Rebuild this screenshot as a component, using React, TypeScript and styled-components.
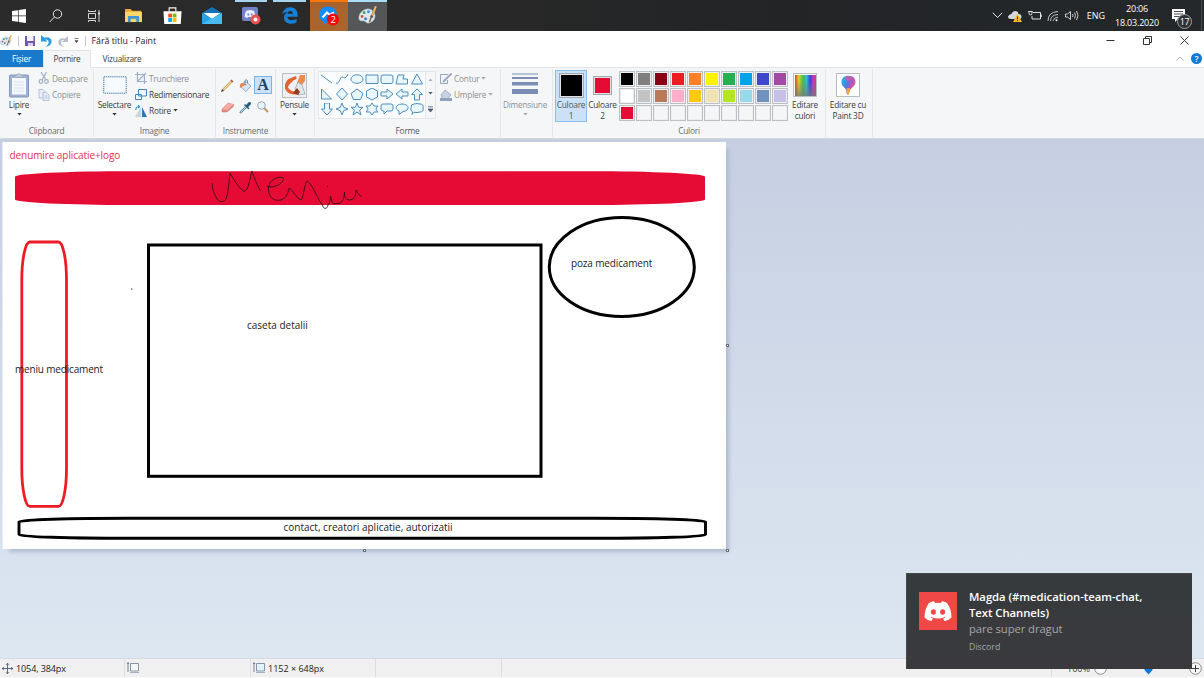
import React from "react";
import styled, { createGlobalStyle } from "styled-components";

const Global = createGlobalStyle`
  * { box-sizing: border-box; }
  html, body { margin: 0; padding: 0; overflow: hidden; }
  body { font-family: "Open Sans", "Noto Sans", sans-serif; }
  svg { display: block; flex: none; }
`;

const Desktop = styled.div`
  position: relative;
  width: 1204px;
  height: 678px;
  display: flex;
  flex-direction: column;
  overflow: hidden;
  background: #fff;
`;

const Text = styled.span<{ $size?: number; $space?: number; $color?: string }>`
  font-size: ${(p) => p.$size ?? 8.3}px;
  letter-spacing: ${(p) => p.$space ?? (p.$size ? 0 : -0.22)}px;
  color: ${(p) => p.$color ?? "#3c3c3c"};
  line-height: 11px;
  white-space: nowrap;
`;

/* Taskbar */
const Taskbar = styled.header`
  height: 31px;
  flex: none;
  display: flex;
  background: linear-gradient(90deg, #2b2b2b, #282828 40%, #222426 65%, #25282b);
`;
const TaskButton = styled.div<{ $width?: number; $bg?: string; $bar?: string; $inset?: number }>`
  width: ${(p) => p.$width ?? 39}px;
  height: 31px;
  display: flex;
  align-items: center;
  justify-content: center;
  background: linear-gradient(${(p) => p.$bar ?? "transparent"}, ${(p) => p.$bar ?? "transparent"}) center top /
      calc(100% - ${(p) => p.$inset ?? 0}px) 2px no-repeat,
    ${(p) => p.$bg ?? "transparent"};
`;
const Tray = styled.div`
  margin-left: auto;
  display: flex;
  align-items: center;
  height: 31px;
  padding-right: 2px;
`;
const TrayIcons = styled.div`
  display: flex;
  align-items: center;
  gap: 5.5px;
  margin-right: 8px;
`;
const Clock = styled.div`
  width: 46px;
  margin: 0 12px 0 9px;
  display: flex;
  flex-direction: column;
  align-items: center;
  gap: 3px;
`;
const Action = styled.div`
  position: relative;
  width: 30px;
  height: 31px;
  border-right: 1px solid #4b4d4f;
  padding-top: 8px;
`;
const ActionCount = styled.div`
  position: absolute;
  left: 5px;
  top: 14px;
  width: 15px;
  height: 15px;
  border: 1px solid #9b9d9f;
  border-radius: 50%;
  background: #303235;
  color: #fff;
  font-size: 9px;
  letter-spacing: -0.3px;
  line-height: 13px;
  text-align: center;
`;

/* Title bar and tabs */
const TitleBar = styled.div`
  height: 19px;
  flex: none;
  display: flex;
  align-items: center;
  padding-top: 1px;
`;
const QuickTools = styled.div`
  display: flex;
  align-items: center;
  width: 91.5px;
  gap: 6px;
`;
const Separator = styled.i<{ $h?: number }>`
  width: 1px;
  height: ${(p) => p.$h ?? 10}px;
  background: #c6c6c6;
  flex: none;
`;
const WindowButtons = styled.div`
  margin-left: auto;
  display: flex;
  align-items: center;
  gap: 28px;
  padding-right: 15px;
  margin-top: -1px;
`;
const Tabs = styled.nav`
  height: 18px;
  flex: none;
  display: flex;
  border-bottom: 1px solid #e2e4e7;
`;
const Tab = styled.div<{ $kind: "file" | "active" | "plain"; $width: number }>`
  width: ${(p) => p.$width}px;
  height: ${(p) => (p.$kind === "active" ? 18 : 17)}px;
  display: flex;
  align-items: center;
  justify-content: center;
  padding-bottom: ${(p) => (p.$kind === "active" ? 2 : 1)}px;
  background: ${(p) => (p.$kind === "file" ? "#1979ca" : p.$kind === "active" ? "#f4f6f8" : "#fff")};
  border: ${(p) => (p.$kind === "active" ? "1px solid #e2e4e7" : "0")};
  border-bottom: 0;
`;
const TabEnd = styled.div`
  margin-left: auto;
  display: flex;
  align-items: center;
  gap: 7px;
`;
const Help = styled.div`
  width: 11px;
  height: 11px;
  margin-right: 2px;
  border-radius: 50%;
  background: #0f7bd7;
  color: #fff;
  font-size: 9px;
  font-weight: 600;
  line-height: 11px;
  text-align: center;
`;

/* Ribbon */
const Ribbon = styled.section`
  height: 71px;
  flex: none;
  display: flex;
  background: #f4f6f8;
  border-bottom: 1px solid #d3d7db;
`;
const Group = styled.div<{ $width: number }>`
  width: ${(p) => p.$width}px;
  height: 68px;
  margin-top: 1px;
  display: flex;
  flex-direction: column;
  border-right: 1px solid #e5e8eb;
`;
const GroupBody = styled.div<{ $pad?: string; $gap?: number }>`
  height: 56px;
  display: flex;
  align-items: flex-start;
  padding: ${(p) => p.$pad ?? "1px 0 0"};
  gap: ${(p) => p.$gap ?? 0}px;
`;
const GroupLabel = styled.div`
  height: 11px;
  display: flex;
  align-items: center;
  justify-content: center;
`;
const BigButton = styled.div<{ $width: number; $selected?: boolean }>`
  width: ${(p) => p.$width}px;
  height: 52px;
  flex: none;
  display: flex;
  flex-direction: column;
  align-items: center;
  border: 1px solid ${(p) => (p.$selected ? "#8cbcec" : "transparent")};
  background: ${(p) => (p.$selected ? "#cbe1f7" : "transparent")};
`;
const BigIcon = styled.div`
  height: 28px;
  flex: none;
  display: flex;
  align-items: center;
`;
const DropCaret = styled.div`
  margin-top: 3px;
`;
const Column = styled.div<{ $pad?: string }>`
  display: flex;
  flex-direction: column;
  padding: ${(p) => p.$pad ?? "0"};
`;
const SmallRow = styled.div`
  height: 16.4px;
  display: flex;
  align-items: center;
  gap: 2px;
`;
const ToolGrid = styled.div`
  height: 56px;
  display: grid;
  grid-template-columns: repeat(3, 17.6px);
  grid-template-rows: 18px 26px;
  padding: 7px 0 0 3px;
`;
const Tool = styled.div<{ $selected?: boolean }>`
  display: flex;
  align-items: center;
  justify-content: center;
  height: 18px;
  align-self: center;
  border: 1px solid ${(p) => (p.$selected ? "#7fb2e5" : "transparent")};
  background: ${(p) => (p.$selected ? "#cbe1f7" : "transparent")};
`;
const BoldA = styled.b`
  font-family: "Liberation Serif", serif;
  font-size: 16px;
  line-height: 16px;
  color: #1d3f66;
`;
const Frame = styled.div<{ $w?: number }>`
  width: ${(p) => p.$w ?? 25}px;
  height: ${(p) => p.$w ?? 25}px;
  border: 1px solid #b8bec5;
  background: #fff;
  display: flex;
  align-items: center;
  justify-content: center;
`;
const Gallery = styled.div`
  height: 48px;
  width: 118px;
  display: flex;
  margin-top: 1px;
  border: 1px solid #e2e6ea;
`;
const ShapeGrid = styled.div`
  display: grid;
  grid-template-columns: repeat(7, 15.1px);
  grid-template-rows: repeat(3, 15.2px);
  width: 107px;
  background: #fbfcfd;
`;
const ShapeCell = styled.div`
  display: flex;
  align-items: center;
  justify-content: center;
`;
const GalleryScroll = styled.div`
  width: 10px;
  display: flex;
  flex-direction: column;
  justify-content: space-around;
  align-items: center;
  border-left: 1px solid #e2e6ea;
`;
const Chip = styled.div<{ $size: number; $color: string }>`
  width: ${(p) => p.$size}px;
  height: ${(p) => p.$size}px;
  border: 1px solid #a3a8ad;
  box-shadow: inset 0 0 0 1px #dfe3e7;
  background: ${(p) => p.$color};
`;
const Palette = styled.div`
  display: grid;
  grid-template-columns: repeat(10, 16px);
  grid-template-rows: repeat(3, 16px);
  gap: 1px;
  margin: 1px 3px 0 1px;
`;
const Swatch = styled.div<{ $color?: string }>`
  border: 1px solid #bdc0c4;
  box-shadow: inset 0 0 0 1px #eceef0;
  background: ${(p) => p.$color ?? "#f4f6f8"};
`;

/* Workspace */
const Workspace = styled.main`
  height: 519px;
  flex: none;
  padding: 3px 0 0 2px;
  background: linear-gradient(#c5cfe1, #dde7f2);
`;
const Canvas = styled.div`
  position: relative;
  width: 724px;
  height: 407px;
  background: #fff;
  border-left: 1px solid #e6ebf3;
  box-shadow: 5px 5px 4px -2px #aebbd1;
`;
const Drawing = styled.svg`
  position: absolute;
  left: -1px;
  top: 0;
`;
const Note = styled.span<{ $x: number; $y: number; $color?: string; $space?: number }>`
  position: absolute;
  left: ${(p) => p.$x - 3}px;
  top: ${(p) => p.$y - 149}px;
  font-family: "Open Sans", sans-serif;
  font-size: 10px;
  line-height: 14px;
  letter-spacing: ${(p) => p.$space ?? 0}px;
  color: ${(p) => p.$color ?? "#1c1c1c"};
  white-space: nowrap;
`;
const Handle = styled.i<{ $x: number; $y: number }>`
  position: absolute;
  left: ${(p) => p.$x - 3}px;
  top: ${(p) => p.$y - 142}px;
  width: 3px;
  height: 3px;
  border: 1px solid #6d7279;
  background: #fff;
`;

/* Status bar */
const StatusBar = styled.footer`
  height: 20px;
  flex: none;
  display: flex;
  background: #f0f0f0;
  border-top: 1px solid #d6dde5;
  border-bottom: 1px solid #fafafa;
`;
const StatusCell = styled.div<{ $width: number }>`
  width: ${(p) => p.$width}px;
  display: flex;
  align-items: center;
  gap: 3px;
  padding-left: 2px;
  border-right: 1px solid #dedede;
`;
const Zoom = styled.div`
  margin-left: auto;
  width: 153px;
  display: flex;
  align-items: center;
  padding-left: 15px;
  border-left: 1px solid #dedede;
`;
const ZoomGap = styled.div`
  width: 4px;
`;
const Thumb = styled.div`
  margin: 0 36px 0 37px;
`;

/* Notification */
const Toast = styled.aside`
  position: absolute;
  left: 906px;
  top: 573px;
  width: 286px;
  height: 96px;
  padding: 18px 0 0 13px;
  display: flex;
  gap: 12px;
  background: linear-gradient(#363a3d, #3a3a3d);
  border: 1px solid #45494c;
  border-width: 1px 0 0 1px;
`;
const ToastIcon = styled.div`
  width: 38px;
  height: 38px;
  margin-left: -1px;
  background: #f04747;
  display: flex;
  align-items: center;
  justify-content: center;
`;
const ToastText = styled.div`
  display: flex;
  flex-direction: column;
  margin-top: -3px;
`;
const ToastTitle = styled.b`
  width: 190px;
  font-size: 11.3px;
  font-weight: 600;
  letter-spacing: -0.04px;
  line-height: 15.6px;
  color: #fff;
`;
const ToastLine = styled.span`
  font-size: 11.3px;
  letter-spacing: -0.1px;
  line-height: 17px;
  color: #a5a6a8;
`;
const ToastSource = styled.span`
  margin-top: 3px;
  font-size: 8.8px;
  line-height: 14px;
  color: #a5a6a8;
`;

const Caret = ({ color = "#333", up = false }: { color?: string; up?: boolean }) => (
  <svg width="5" height="3" viewBox="0 0 5 3">
    <path d={up ? "M.4 3h4.2L2.5.5z" : "M.4 0h4.2L2.5 2.5z"} fill={color} />
  </svg>
);

const PaletteIcon = ({ size }: { size: number }) => (
  <svg width={size} height={size} viewBox="0 0 20 20">
    <path d="M10 3C4 4 0 9 1 14c1 3 4 1 6 2 2 2 4 3 7 1 4-2 5-7 3-10-2-3-4-4-7-4z" fill="#dce8f1" stroke="#8ba2b3" strokeWidth=".6" />
    <circle cx="4.3" cy="11" r="1.5" fill="#e34f3e" />
    <circle cx="6.5" cy="7" r="1.5" fill="#3da64c" />
    <circle cx="11" cy="6" r="1.5" fill="#3f8edb" />
    <circle cx="14.5" cy="11" r="1.5" fill="#35597b" />
    <circle cx="8" cy="13.500" r="1.5" fill="#3f78b7" />
    <path d="M17.500 2 12 17" stroke="#8a5c2c" strokeWidth="1.500" />
    <path d="M18.500 1 15.500 9" stroke="#e9ac66" strokeWidth="2.200" strokeLinecap="round" />
  </svg>
);

const DiscordFace = ({ width, eyes, fill = "#fff" }: { width: number; eyes: string; fill?: string }) => (
  <svg width={width} height={width * 0.75} viewBox="0 0 28 21">
    <path
      d="M5 2Q7.500.6 10 .3l1.200 1.600q2.800-.5 5.600 0L18 .3q2.500.3 5 1.700 4.500 6 4.500 14.500Q25 19.500 20.500 20L19 17.700l2.500-1.200-.6-.5q-6.900 3-13.800 0l-.6.5L9 17.700 7.500 20Q3 19.500.5 16.500.5 8 5 2z"
      fill={fill}
    />
    <ellipse cx="9.400" cy="11" rx="2.500" ry="2.800" fill={eyes} />
    <ellipse cx="18.600" cy="11" rx="2.500" ry="2.800" fill={eyes} />
  </svg>
);

const shapes = [
  "M1 2 12 10",
  "M1 10C4 12 5 5 6.500 4S10 8 13 1",
  "M7 1.800c8 0 8 8.500 0 8.500s-8-8.500 0-8.500z",
  "M1 2h12v8.500H1z",
  "M3 2h8q2 0 2 2v4.500q0 2-2 2H3q-2 0-2-2V4q0-2 2-2z",
  "M3 2h6L8 6h4.500v5H1z",
  "M7 1 12.500 11h-11z",
  "M1.500 1v10h10z",
  "M7 0l5.500 6L7 12 1.500 6z",
  "M7 1l6 4.500L10.500 11.500h-7L1 5.500z",
  "M7 0l5.500 3v6L7 12 1.500 9V3z",
  "M1 4h6V1l6 5-6 5V8H1z",
  "M13 4H7V1L1 6l6 5V8h6z",
  "M4.500 12V6.500H1.500L7 1l5.500 5.500h-3V12z",
  "M4.500 0v6h-3L7 12l5.500-6h-3V0z",
  "M7 0l1.700 4.300L13 6 8.700 7.700 7 12 5.300 7.700 1 6l4.300-1.700z",
  "M7 0l1.700 4.300H13l-3.400 2.800L11 12 7 9l-4 3 1.400-4.900L1 4.300h4.300z",
  "M7 0l2 3h3.800l-1.900 3 1.900 3H9l-2 3-2-3H1.200l1.900-3-1.900-3H5z",
  "M3 1h8q2 0 2 2v3q0 2-2 2H7l-3 3V8H3Q1 8 1 6V3q0-2 2-2z",
  "M7 1c8 0 8 7 1 7.500L4 11.500V8C-1 6 1 1 7 1z",
  "M4 1q3-1 6 0 4 0 3 4 1 4-3 4-3 1-6 .3L2 11.500 2.500 9Q0 7 1 4.500 1 1 4 1z",
];

const row1 = ["#000000", "#7f7f7f", "#880015", "#ed1c24", "#ff7f27", "#fff200", "#22b14c", "#00a2e8", "#3f48cc", "#a349a4"];
const row2 = ["#ffffff", "#c3c3c3", "#b97a57", "#ffaec9", "#ffc90e", "#efe4b0", "#b5e61d", "#99d9ea", "#7092be", "#c8bfe7"];
const palette: (string | undefined)[] = [...row1, ...row2, "#e60b35", ...Array(9).fill(undefined)];

const muted = "#8e9196";

function SizeIcon({ fill }: { fill: string }) {
  return (
    <svg width="12" height="12" viewBox="0 0 12 12">
      <path d="M3.500 1.500h8v7.500h-8z" fill={fill} stroke="#8595ab" />
      <path d="M1 1v9M0 2l1-1.500L2 2" fill="none" stroke="#53677f" strokeWidth=".8" />
      <path d="M3 10.500h9" stroke="#a5b1c1" />
    </svg>
  );
}

function ZoomIcon({ plus = false }: { plus?: boolean }) {
  return (
    <svg width="13" height="13" viewBox="0 0 13 13" fill="#f8f8f8" stroke="#8b8b8b">
      <circle cx="6.500" cy="6.500" r="5.800" />
      <path d={plus ? "M3 6.500h7M6.500 3v7" : "M3 6.500h7"} stroke="#444" />
    </svg>
  );
}

export default function App() {
  return (
    <Desktop>
      <Global />
      <Taskbar>
        <TaskButton $width={37}>
          <svg width="14" height="14" viewBox="0 0 14 14" fill="#fff">
            <path d="M0 2 6 1.200V6.600H0zM6.700 1.100 14 0v6.600H6.700zM0 7.300h6v5.500L0 12zM6.700 7.300H14V14L6.700 12.900z" />
          </svg>
        </TaskButton>
        <TaskButton $width={38}>
          <svg width="14" height="14" viewBox="0 0 14 14" fill="none" stroke="#e6e6e6" strokeWidth="1">
            <circle cx="8.500" cy="5" r="4.200" />
            <path d="M5.500 8 .7 13" />
          </svg>
        </TaskButton>
        <TaskButton $width={37}>
          <svg width="14" height="14" viewBox="0 0 14 14" fill="none" stroke="#d5d5d5">
            <path d="M1.500 4.500h7v5h-7zM1.500 1v1.500h7V1M1.500 13v-1.500h7V13M12 1v12" />
            <path d="M11 4.500h2" strokeWidth="2" />
          </svg>
        </TaskButton>
        <TaskButton $width={42}>
          <svg width="17" height="15" viewBox="0 0 18 16">
            <path d="M0 1h6l1.500 2H17v12H0z" fill="#e8ab2c" />
            <path d="M0 4h18v11H0z" fill="#ffd768" />
            <path d="M3 15V9.500q0-1 1-1h10q1 0 1 1V15h-3v-3.500H6V15z" fill="#3e94d6" />
          </svg>
        </TaskButton>
        <TaskButton $width={37}>
          <svg width="19" height="19" viewBox="0 0 20 19">
            <path d="M6.500 5V1.500h7V5" fill="none" stroke="#f4f4f4" strokeWidth="1.200" />
            <path d="M.5 5h19l-.8 13.500H1.300z" fill="#fff" />
            <path d="M5.500 7.500h4v4h-4z" fill="#f25022" />
            <path d="M10.200 7.500h4v4h-4z" fill="#7fba00" />
            <path d="M5.500 12.200h4v4h-4z" fill="#00a4ef" />
            <path d="M10.200 12.200h4v4h-4z" fill="#ffb900" />
          </svg>
        </TaskButton>
        <TaskButton $width={41}>
          <svg width="20" height="17" viewBox="0 0 20 17">
            <path d="M0 6 10 0l10 6v11H0z" fill="#1673ba" />
            <path d="M1.500 6h17L10 12z" fill="#fff" />
            <path d="M0 6l10 6L20 6v11H0z" fill="#2aa3e5" />
            <path d="M0 17 20 6v11z" fill="#48bcf2" />
          </svg>
        </TaskButton>
        <TaskButton $width={38} $bar="#a6d3ee" $inset={6}>
          <svg width="19" height="18" viewBox="0 0 19 18">
            <path d="M2 0h12q2 0 2 2v14l-3-2H2q-2 0-2-2V2Q0 0 2 0z" fill="#7182c9" />
            <path d="M4 4q4-2 8 0 1.500 3 1.300 6Q12 11 10.500 11L10 10H6l-.5 1Q4 11 2.700 10 2.500 7 4 4z" fill="#e8edff" />
            <circle cx="6.300" cy="7.500" r="1" fill="#7182c9" />
            <circle cx="9.800" cy="7.500" r="1" fill="#7182c9" />
            <circle cx="13.500" cy="12.500" r="5" fill="#f04f50" />
            <circle cx="13.500" cy="12.500" r="2" fill="#fff" />
          </svg>
        </TaskButton>
        <TaskButton $width={39.5} $bar="#a6d3ee" $inset={7}>
          <svg width="16" height="17" viewBox="0 0 16 17">
            <path
              d="M.4 7.500C1 3 4 .2 8 .2c5 0 7.800 3.500 7.700 7.800v1.800H5.300c.2 2.500 2.300 3.500 4.700 3.500 1.800 0 3.300-.5 4.500-1.200v3.500c-1.500.8-3.300 1.200-5.300 1.200-4.400 0-7.200-2.500-7.200-6 0-2.600 1.500-4.700 3.800-5.700C3.800 5 1.600 5.800.4 7.500zM5.500 6.800h5.400c0-1.900-1-2.800-2.600-2.800-1.500 0-2.500 1-2.800 2.800z"
              fill="#1580d8"
            />
          </svg>
        </TaskButton>
        <TaskButton $width={38.5} $bg="#a9632b" $bar="#ff7708">
          <svg width="20" height="20" viewBox="0 0 20 20">
            <path d="M9 .5c5 0 9 3.500 9 8.300S14 17 9 17l-2-.2L4 19v-3.500C1.500 14 0 11.500 0 8.800 0 4 4 .5 9 .5z" fill="#128bff" />
            <path d="M3.500 11.500 8 6.500l2.500 2.300L15 6.500" fill="none" stroke="#fff" strokeWidth="2" />
            <circle cx="14" cy="13.500" r="6" fill="#f90808" />
            <text x="11.500" y="17" fontSize="9.500" fill="#fff" fontFamily="Open Sans">2</text>
          </svg>
        </TaskButton>
        <TaskButton $width={39} $bg="#555658" $bar="#a8dcfa">
          <PaletteIcon size={19} />
        </TaskButton>
        <Tray>
          <TrayIcons>
            <svg width="11" height="7" viewBox="0 0 11 7" fill="none" stroke="#e6e6e6">
              <path d="M.8.8 5.500 5.500 10.200.8" />
            </svg>
            <svg width="14" height="12" viewBox="0 0 14 12">
              <path d="M3 9Q0 9 0 6.500 1 4 3.500 4q1-3 4-3 3 .5 3 3 3 0 3 3 0 2-2 2z" fill="#d5d8da" />
              <path d="M9.500 4 14 12H5z" fill="#f7b62d" />
              <path d="M9.500 6.500v2.800m0 .8v1" stroke="#39342b" />
            </svg>
            <svg width="14" height="11" viewBox="0 0 14 11" fill="none" stroke="#dedede">
              <path d="M5 2.500h7.500v6.500H4V6M13.300 4.500v2.500M1 1v2q0 2 1.500 2T4 3V1M.5 1.500h4" />
            </svg>
            <svg width="12" height="12" viewBox="0 0 12 12" fill="none" stroke="#bdbfc1" strokeWidth="1">
              <path d="M1 11Q1 2 11 1.500M3.500 11Q3.500 5 11 4.500M6 11Q6.500 7.500 11 7.200" />
              <circle cx="9.500" cy="10.300" r="1" fill="#fff" stroke="none" />
            </svg>
            <svg width="14" height="11" viewBox="0 0 14 11" fill="none" stroke="#dedede" strokeWidth=".9">
              <path d="M.5 4h2l3-2.500v8L2.500 7h-2zM7.500 4q1 1.500 0 3M9.500 2.500q2 3 0 6M11.500 1q3 4.500 0 9" />
            </svg>
          </TrayIcons>
          <Text $size={9} $color="#fff">ENG</Text>
          <Clock>
            <Text $size={9} $color="#fff" $space={-0.15}>20:06</Text>
            <Text $size={9} $color="#fff" $space={-0.2}>18.03.2020</Text>
          </Clock>
          <Action>
            <svg width="14" height="15" viewBox="0 0 14 15">
              <path d="M0 1h13v10H6l-3 3v-3H0z" fill="#fff" />
              <path d="M2 3.500h9M2 6h9M2 8.500h6" stroke="#36383b" strokeWidth=".9" />
            </svg>
            <ActionCount>17</ActionCount>
          </Action>
        </Tray>
      </Taskbar>

      <TitleBar>
        <QuickTools>
          <PaletteIcon size={12} />
          <Separator />
          <svg width="10" height="10" viewBox="0 0 10 10">
            <path d="M0 0h10v10H0z" fill="#7257b3" />
            <path d="M2 0h6.500v5H2z" fill="#eef1fa" />
            <path d="M3 7h5v3H3z" fill="#d7d0ea" />
          </svg>
          <svg width="11" height="12" viewBox="0 0 10 11">
            <path d="M0 0v6h6L4 4.200Q7 3.500 7 6.500T3.500 11Q10 10 9.700 5.500 8.500 1 3 2.500z" fill="#2f9be0" />
          </svg>
          <svg width="10" height="11" viewBox="0 0 10 11">
            <path d="M10 0v6H4l2-1.800Q3 3.500 3 6.500T6.500 11Q0 10 .3 5.500 1.500 1 7 2.500z" fill="#b5c0cf" />
          </svg>
          <svg width="5" height="6" viewBox="0 0 5 6">
            <path d="M.5.500h4M1 2.700h3L2.500 4.500z" fill="#444" stroke="#444" strokeWidth=".7" />
          </svg>
          <Separator />
        </QuickTools>
        <Text $size={8.8} $color="#222">Fără titlu - Paint</Text>
        <WindowButtons>
          <svg width="9" height="9" viewBox="0 0 9 9"><path d="M.5 4.500h8" stroke="#333" /></svg>
          <svg width="9" height="9" viewBox="0 0 9 9" fill="none" stroke="#333">
            <path d="M.5 2.500h6v6h-6zM2.500 2.500v-2h6v6h-2" />
          </svg>
          <svg width="9" height="9" viewBox="0 0 9 9"><path d="M.5.500l8 8M8.500.500l-8 8" stroke="#333" /></svg>
        </WindowButtons>
      </TitleBar>

      <Tabs>
        <Tab $kind="file" $width={43}><Text $color="#fff">Fișier</Text></Tab>
        <Tab $kind="active" $width={48}><Text>Pornire</Text></Tab>
        <Tab $kind="plain" $width={62}><Text>Vizualizare</Text></Tab>
        <TabEnd>
          <svg width="8" height="5" viewBox="0 0 8 5"><path d="M.5 4.500 4 1l3.500 3.500" fill="none" stroke="#a9acb0" /></svg>
          <Help>?</Help>
        </TabEnd>
      </Tabs>

      <Ribbon>
        <Group $width={94}>
          <GroupBody>
            <BigButton $width={38}>
              <BigIcon>
                <svg width="20" height="25" viewBox="0 0 20 25">
                  <rect x=".5" y="2" width="19" height="22" rx="1" fill="#9fb1d2" stroke="#8497bb" />
                  <path d="M3 5h14v16.500H3z" fill="#f4f7fc" />
                  <path d="M5 9h10M5 12h10M5 15h10M5 18h10" stroke="#d4ddec" strokeWidth=".8" />
                  <path d="M5.500 4.500q0-2 2-2Q8 .7 10 .7T12.500 2.500q2 0 2 2z" fill="#c0cadc" stroke="#8f9db8" strokeWidth=".6" />
                </svg>
              </BigIcon>
              <Text>Lipire</Text>
              <DropCaret><Caret /></DropCaret>
            </BigButton>
            <Column>
              <SmallRow>
                <svg width="12" height="12" viewBox="0 0 12 12" fill="none" stroke="#9fafc8" strokeWidth="1.200">
                  <path d="M3 0 8 8M8.500 0 4 8" /><circle cx="3" cy="9.500" r="1.800" /><circle cx="8.500" cy="9.500" r="1.800" />
                </svg>
                <Text $color={muted}>Decupare</Text>
              </SmallRow>
              <SmallRow>
                <svg width="12" height="12" viewBox="0 0 12 12" fill="#e8edf6" stroke="#afbdd6" strokeWidth=".9">
                  <path d="M1 .5h4l2 2V9H1z" /><path d="M5 3.500h3.500L11 6v5.500H5zM6.500 7h3M6.500 9h3" />
                </svg>
                <Text $color={muted}>Copiere</Text>
              </SmallRow>
            </Column>
          </GroupBody>
          <GroupLabel><Text $color="#6a6d71">Clipboard</Text></GroupLabel>
        </Group>

        <Group $width={122}>
          <GroupBody>
            <BigButton $width={41}>
              <BigIcon>
                <svg width="24" height="18" viewBox="0 0 24 18">
                  <rect x=".8" y=".8" width="22.400" height="16.400" fill="#f7fafc" stroke="#3779aa" strokeDasharray="1.300 .8" />
                </svg>
              </BigIcon>
              <Text>Selectare</Text>
              <DropCaret><Caret /></DropCaret>
            </BigButton>
            <Column>
              <SmallRow>
                <svg width="12" height="12" viewBox="0 0 12 12" fill="none" stroke="#9fafc8" strokeWidth="1.200">
                  <path d="M2.500 0v9.500H12M0 2.500h9.500V12M2.500 9.500 11 1" />
                </svg>
                <Text $color={muted}>Trunchiere</Text>
              </SmallRow>
              <SmallRow>
                <svg width="12" height="11" viewBox="0 0 12 11" fill="#eff8ff" stroke="#4189bd">
                  <path d="M3.500.5h8v6.500h-8zM.5 5.500h6v5h-6z" />
                </svg>
                <Text>Redimensionare</Text>
              </SmallRow>
              <SmallRow>
                <svg width="12" height="12" viewBox="0 0 12 12">
                  <path d="M6 2v10H0z" fill="#c4d5e5" /><path d="M7 2v10h5z" fill="#2878b5" />
                  <path d="M.7 5Q.5 1.500 4 1.500M3 0l2 1.500L3 3" fill="none" stroke="#2f83c6" />
                </svg>
                <Text>Rotire</Text>
                <Caret />
              </SmallRow>
            </Column>
          </GroupBody>
          <GroupLabel><Text $color="#6a6d71">Imagine</Text></GroupLabel>
        </Group>

        <Group $width={60}>
          <ToolGrid>
            <Tool>
              <svg width="13" height="13" viewBox="0 0 13 13">
                <path d="M2 11 11 2" stroke="#b68b35" strokeWidth="2.400" /><path d="M2.500 10.500 10.500 2.500" stroke="#f4dda0" strokeWidth="1.100" />
                <path d="m0 13 1-3L3 12z" fill="#453e38" /><path d="m10 1 2 2" stroke="#b85143" strokeWidth="1.500" />
              </svg>
            </Tool>
            <Tool>
              <svg width="13" height="13" viewBox="0 0 13 13">
                <path d="m6 2 6 5-5 5.500L2 8z" fill="#d7e6f2" stroke="#7c9ab1" strokeWidth=".8" />
                <path d="M1 9Q0 4 4 4l4 2Q4 6 1 9z" fill="#e58256" /><path d="M6 6V1.500Q7 0 8.500 1.500V4" fill="none" stroke="#6c8cab" />
              </svg>
            </Tool>
            <Tool $selected><BoldA>A</BoldA></Tool>
            <Tool>
              <svg width="13" height="11" viewBox="0 0 13 11">
                <path d="M1 7 7 1l5.500 1.500v2L6 10H1z" fill="#e88b86" stroke="#cd7772" strokeWidth=".5" /><path d="M1 7 7 1l5.500 1.500L6 8z" fill="#f5aaa2" />
              </svg>
            </Tool>
            <Tool>
              <svg width="13" height="13" viewBox="0 0 13 13">
                <path d="M1 12 7 6" stroke="#527d9d" strokeWidth="2" /><path d="M1.500 11.500 7 6" stroke="#cee8f8" strokeWidth=".8" />
                <path d="m6 4 3.500 3.500" stroke="#285a82" strokeWidth="1.600" strokeLinecap="round" /><path d="m8.500 4.800 2-2.300" stroke="#285a82" strokeWidth="3" strokeLinecap="round" />
              </svg>
            </Tool>
            <Tool>
              <svg width="12" height="12" viewBox="0 0 12 12">
                <path d="m7 7 4 4" stroke="#bd966e" strokeWidth="2" /><circle cx="4.500" cy="4.500" r="3.800" fill="#e7f3fc" stroke="#91a5b7" />
              </svg>
            </Tool>
          </ToolGrid>
          <GroupLabel><Text $color="#6a6d71">Instrumente</Text></GroupLabel>
        </Group>

        <Group $width={39}>
          <GroupBody>
            <BigButton $width={37}>
              <BigIcon>
                <Frame>
                  <svg width="23" height="23" viewBox="0 0 23 23">
                    <path d="M0 0h23v23H0z" fill="#eef1f3" />
                    <path d="M12 4Q2 7 3.500 14q2 4.500 7.500 5 5 0 7-2.500" fill="none" stroke="#e36432" strokeWidth="3.200" strokeLinecap="round" />
                    <path d="m12 4-3 4q-4 3-4.500 7Q2 7 12 4z" fill="#e36432" />
                    <path d="M17 1h5v6l-4 5-4-3z" fill="#ee8c4e" />
                    <path d="m15 8 4 3 3 9-7 1-3-6z" fill="#e3e7e9" stroke="#949da5" strokeWidth=".7" />
                    <path d="m10 19 4-5 3 4-2 3z" fill="#8e3d22" />
                  </svg>
                </Frame>
              </BigIcon>
              <Text>Pensule</Text>
              <DropCaret><Caret /></DropCaret>
            </BigButton>
          </GroupBody>
        </Group>

        <Group $width={186}>
          <GroupBody $pad="1px 0 0 3px" $gap={4}>
            <Gallery>
              <ShapeGrid>
                {shapes.map((d, i) => (
                  <ShapeCell key={i}>
                    <svg width="14" height="13" viewBox="0 0 14 13">
                      <path d={d} fill={i < 2 ? "none" : "#e9f6fc"} stroke="#4a8fbf" strokeWidth="1" />
                    </svg>
                  </ShapeCell>
                ))}
              </ShapeGrid>
              <GalleryScroll>
                <Caret up color="#a9b4c0" />
                <Caret color="#4a5e76" />
                <svg width="5" height="6" viewBox="0 0 5 6"><path d="M0 .8h5M0 3h5L2.500 6z" fill="#4a5e76" stroke="#4a5e76" strokeWidth=".8" /></svg>
              </GalleryScroll>
            </Gallery>
            <Column>
              <SmallRow>
                <svg width="12" height="11" viewBox="0 0 12 11" fill="none" stroke="#96a6c1">
                  <path d="M8 1.500H.5v9h7V7" /><path d="m3 9 8.500-8.500" strokeWidth="1.800" />
                </svg>
                <Text $color={muted}>Contur</Text>
                <Caret color="#a0a5ac" />
              </SmallRow>
              <SmallRow>
                <svg width="12" height="12" viewBox="0 0 12 12">
                  <path d="m5 1 6 5-4 4.500H3L1 6z" fill="#c6d1e2" stroke="#93a4be" strokeWidth=".8" /><path d="M0 9h12v3H0z" fill="#8fa0bd" />
                </svg>
                <Text $color={muted}>Umplere</Text>
                <Caret color="#a0a5ac" />
              </SmallRow>
            </Column>
          </GroupBody>
          <GroupLabel><Text $color="#55585c">Forme</Text></GroupLabel>
        </Group>

        <Group $width={52}>
          <GroupBody>
            <BigButton $width={48}>
              <BigIcon>
                <svg width="26" height="24" viewBox="0 0 26 24" fill="#7c8db3">
                  <path d="M0 .500h26v1H0zM0 4h26v2H0zM0 9h26v3.500H0zM0 16h26v5H0z" />
                </svg>
              </BigIcon>
              <Text $color={muted}>Dimensiune</Text>
              <DropCaret><Caret color="#a0a5ac" /></DropCaret>
            </BigButton>
          </GroupBody>
        </Group>

        <Group $width={273}>
          <GroupBody $pad="1px 0 0 2px">
            <BigButton $width={32} $selected>
              <BigIcon><Chip $size={25} $color="#000" /></BigIcon>
              <Text $color="#4d5966">Culoare</Text>
              <Text $color="#4d5966">1</Text>
            </BigButton>
            <BigButton $width={31}>
              <BigIcon><Chip $size={19} $color="#e60b35" /></BigIcon>
              <Text>Culoare</Text>
              <Text>2</Text>
            </BigButton>
            <Palette>
              {palette.map((c, i) => <Swatch key={i} $color={c} />)}
            </Palette>
            <BigButton $width={28}>
              <BigIcon>
                <Frame $w={24}>
                  <svg width="21" height="21" viewBox="0 0 21 21">
                    <defs>
                      <linearGradient id="hue">
                        <stop offset="0" stopColor="#e33b36" /><stop offset=".18" stopColor="#dbd229" /><stop offset=".38" stopColor="#42bd4c" />
                        <stop offset=".55" stopColor="#32bfd4" /><stop offset=".72" stopColor="#3942da" /><stop offset=".87" stopColor="#bd3bc8" /><stop offset="1" stopColor="#e03a52" />
                      </linearGradient>
                      <linearGradient id="dim" x2="0" y2="1"><stop offset=".3" stopColor="#777" stopOpacity="0" /><stop offset="1" stopColor="#777" stopOpacity=".75" /></linearGradient>
                    </defs>
                    <path d="M0 0h21v21H0z" fill="url(#hue)" /><path d="M0 0h21v21H0z" fill="url(#dim)" />
                  </svg>
                </Frame>
              </BigIcon>
              <Text>Editare</Text>
              <Text>culori</Text>
            </BigButton>
          </GroupBody>
          <GroupLabel><Text $color="#6a6d71">Culori</Text></GroupLabel>
        </Group>

        <Group $width={47}>
          <GroupBody>
            <BigButton $width={44}>
              <BigIcon>
                <Frame $w={24}>
                  <svg width="15" height="20" viewBox="0 0 16 21">
                    <defs>
                      <linearGradient id="drop" x1="0" y1=".3" x2="1" y2=".8">
                        <stop offset="0" stopColor="#13bbee" /><stop offset=".4" stopColor="#5975e0" /><stop offset=".65" stopColor="#c24fc4" /><stop offset="1" stopColor="#f18a3d" />
                      </linearGradient>
                    </defs>
                    <path d="M8 .5c5 0 7.500 3 7.500 7S11 13 9 17q-.5 3.500-2 3.500T6 17C5 13 .5 12 .5 7.500S3 .5 8 .5z" fill="url(#drop)" />
                    <path d="M3 3Q8-1 13 3L8 7z" fill="#e45499" opacity=".75" /><path d="M6 14h4l-2 7q-2 0-2-4z" fill="#f4a42c" />
                  </svg>
                </Frame>
              </BigIcon>
              <Text>Editare cu</Text>
              <Text>Paint 3D</Text>
            </BigButton>
          </GroupBody>
        </Group>
      </Ribbon>

      <Workspace>
        <Canvas>
          <Drawing width="724" height="407" viewBox="2 142 724 407" fill="none">
            <rect x="15" y="171.200" width="690" height="33.800" rx="115" ry="5.500" fill="#e60b35" />
            <path
              d="M212.300 183C212 190 214 193 217 199c2 3 6 3.500 8.500 1 2.500-4 3.500-18 4.500-27 3 5 7 13 14 18.500 5-1 6-14.500 8-20.500 2 7 5 14 8.500 20M267 186.500c8 2 17-3.500 16.500-8.500-3.500-2-15.500 0-15 12 .5 9 6.500 11 12.500 10 7-3 7-8 8-12 4 2 8 11 12 12 3-3 3-15 6-19 5 2 11 19 15.500 24 .5 4 4.500 5 5.500 0 3-5 2-7 2.500-9 1.500 6 1.500 8 4.500 7.500 6 .5 9-1.500 9.500-11.500-.5 6 2.500 8 5.500 8 5-1 6-5 6-10 2 4 4 6.500 6 6"
              stroke="#35101b" strokeWidth=".9"
            />
            <path d="M327 186.500h1" stroke="#35101b" />
            <rect x="21.800" y="242" width="44.700" height="264.300" rx="8" ry="38" stroke="#ed1c24" strokeWidth="2.800" />
            <rect x="148.500" y="245" width="392.500" height="231.300" stroke="#000" strokeWidth="3" />
            <ellipse cx="621.800" cy="267" rx="72.500" ry="49.500" stroke="#000" strokeWidth="3" />
            <rect x="19" y="518.300" width="686.500" height="20" rx="110" ry="3.500" stroke="#000" strokeWidth="2.900" />
            <path d="M131 289h1.500" stroke="#888" strokeWidth="1.300" />
          </Drawing>
          <Note $x={9.5} $y={155} $color="#e9304f" $space={-0.08}>denumire aplicatie+logo</Note>
          <Note $x={571} $y={263} $space={-0.15}>poza medicament</Note>
          <Note $x={247} $y={325}>caseta detalii</Note>
          <Note $x={15} $y={369} $space={-0.17}>meniu medicament</Note>
          <Note $x={283.5} $y={527}>contact, creatori aplicatie, autorizatii</Note>
          <Handle $x={726} $y={344} />
          <Handle $x={363} $y={549} />
          <Handle $x={726} $y={549} />
        </Canvas>
      </Workspace>

      <StatusBar>
        <StatusCell $width={125}>
          <svg width="11" height="11" viewBox="0 0 11 11" fill="none" stroke="#4b5c75" strokeWidth=".9">
            <path d="M5.500 0v11M0 5.500h11M4 1.800 5.500.3 7 1.800M4 9.200l1.500 1.500L7 9.200M1.800 4 .3 5.500 1.800 7M9.200 4l1.500 1.500L9.200 7" />
          </svg>
          <Text $size={9} $color="#222" $space={-0.1}>1054, 384px</Text>
        </StatusCell>
        <StatusCell $width={126}><SizeIcon fill="#f3f5f6" /></StatusCell>
        <StatusCell $width={125}>
          <SizeIcon fill="#e4f2fb" />
          <Text $size={9} $color="#222">1152 × 648px</Text>
        </StatusCell>
        <StatusCell $width={126} />
        <Zoom>
          <Text $size={9}>100%</Text>
          <ZoomGap />
          <ZoomIcon />
          <Thumb><svg width="9" height="14" viewBox="0 0 9 14"><path d="M.5 0h8v9l-4 4.500-4-4.500z" fill="#0878d8" /></svg></Thumb>
          <ZoomIcon plus />
        </Zoom>
      </StatusBar>

      <Toast>
        <ToastIcon><DiscordFace width={28} eyes="#f04747" /></ToastIcon>
        <ToastText>
          <ToastTitle>Magda (#medication-team-chat,<br />Text Channels)</ToastTitle>
          <ToastLine>pare super dragut</ToastLine>
          <ToastSource>Discord</ToastSource>
        </ToastText>
      </Toast>
    </Desktop>
  );
}
